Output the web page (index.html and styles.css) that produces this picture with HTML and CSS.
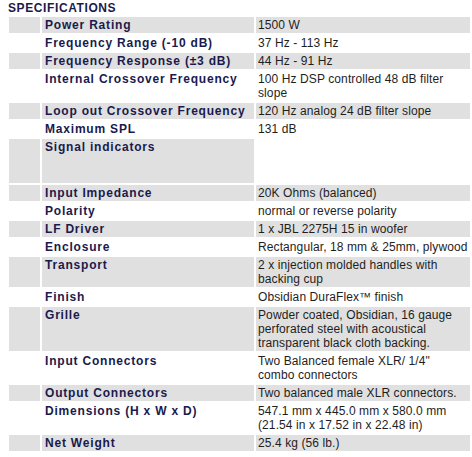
FILE: index.html
```html
<!DOCTYPE html>
<html>
<head>
<meta charset="utf-8">
<link rel="stylesheet" href="styles.css">
</head>
<body>
<div class="title">SPECIFICATIONS</div>
<table class="specs">
<colgroup><col class="c1"><col class="c2"><col class="c3"></colgroup>
<tr class="odd"><td class="pad"></td><td class="label">Power Rating</td><td class="val">1500 W</td></tr>
<tr><td class="pad"></td><td class="label">Frequency Range (-10 dB)</td><td class="val">37 Hz - 113 Hz</td></tr>
<tr class="odd"><td class="pad"></td><td class="label">Frequency Response (±3 dB)</td><td class="val">44 Hz - 91 Hz</td></tr>
<tr><td class="pad"></td><td class="label">Internal Crossover Frequency</td><td class="val">100 Hz DSP controlled 48 dB filter<br>slope</td></tr>
<tr class="odd"><td class="pad"></td><td class="label">Loop out Crossover Frequency</td><td class="val">120 Hz analog 24 dB filter slope</td></tr>
<tr><td class="pad"></td><td class="label">Maximum SPL</td><td class="val">131 dB</td></tr>
<tr class="odd"><td class="pad"></td><td class="label tall">Signal indicators</td><td class="val empty"></td></tr>
<tr class="odd"><td class="pad"></td><td class="label">Input Impedance</td><td class="val">20K Ohms (balanced)</td></tr>
<tr><td class="pad"></td><td class="label">Polarity</td><td class="val">normal or reverse polarity</td></tr>
<tr class="odd"><td class="pad"></td><td class="label">LF Driver</td><td class="val">1 x JBL 2275H 15 in woofer</td></tr>
<tr><td class="pad"></td><td class="label">Enclosure</td><td class="val">Rectangular, 18 mm &amp; 25mm, plywood</td></tr>
<tr class="odd"><td class="pad"></td><td class="label">Transport</td><td class="val">2 x injection molded handles with<br>backing cup</td></tr>
<tr><td class="pad"></td><td class="label">Finish</td><td class="val">Obsidian DuraFlex™ finish</td></tr>
<tr class="odd"><td class="pad"></td><td class="label">Grille</td><td class="val">Powder coated, Obsidian, 16 gauge<br>perforated steel with acoustical<br>transparent black cloth backing.</td></tr>
<tr><td class="pad"></td><td class="label">Input Connectors</td><td class="val">Two Balanced female XLR/ 1/4"<br>combo connectors</td></tr>
<tr class="odd"><td class="pad"></td><td class="label">Output Connectors</td><td class="val">Two balanced male XLR connectors.</td></tr>
<tr><td class="pad"></td><td class="label">Dimensions (H x W x D)</td><td class="val">547.1 mm x 445.0 mm x 580.0 mm<br>(21.54 in x 17.52 in x 22.48 in)</td></tr>
<tr class="odd"><td class="pad"></td><td class="label">Net Weight</td><td class="val">25.4 kg (56 lb.)</td></tr>
</table>
</body>
</html>
```
FILE: styles.css
```css
html, body {
  margin: 0;
  padding: 0;
  background: #ffffff;
}
body {
  font-family: "Liberation Sans", Arial, sans-serif;
  font-size: 12px;
  line-height: 14px;
  overflow: hidden;
}
.title {
  padding: 1px 0 0 8px;
  height: 14px;
  font-weight: bold;
  letter-spacing: 0.6px;
  color: #1a1a4c;
}
.specs {
  margin-left: 7px;
  border-collapse: separate;
  border-spacing: 2px;
  table-layout: fixed;
  width: 465px;
}
.specs .c1 { width: 31px; }
.specs .c2 { width: 212px; }
.specs .c3 { width: 214px; }
.specs td {
  box-sizing: border-box;
  padding: 1px 2px 1px 3px;
  vertical-align: top;
  line-height: 14px;
  height: 16px;
}
.specs .pad {
  padding: 0;
}
.specs .label {
  font-weight: bold;
  letter-spacing: 0.8px;
  color: #1a1a4c;
  white-space: nowrap;
  overflow: hidden;
}
.specs .label.tall {
  height: 44px;
}
.specs .val {
  padding-left: 2px;
  padding-right: 1px;
  color: #1e1e1e;
  letter-spacing: 0.1px;
  white-space: nowrap;
}
.specs tr.odd td {
  background: #e0e0e0;
}
.specs tr.odd td.val.empty {
  background: #ffffff;
}
```
